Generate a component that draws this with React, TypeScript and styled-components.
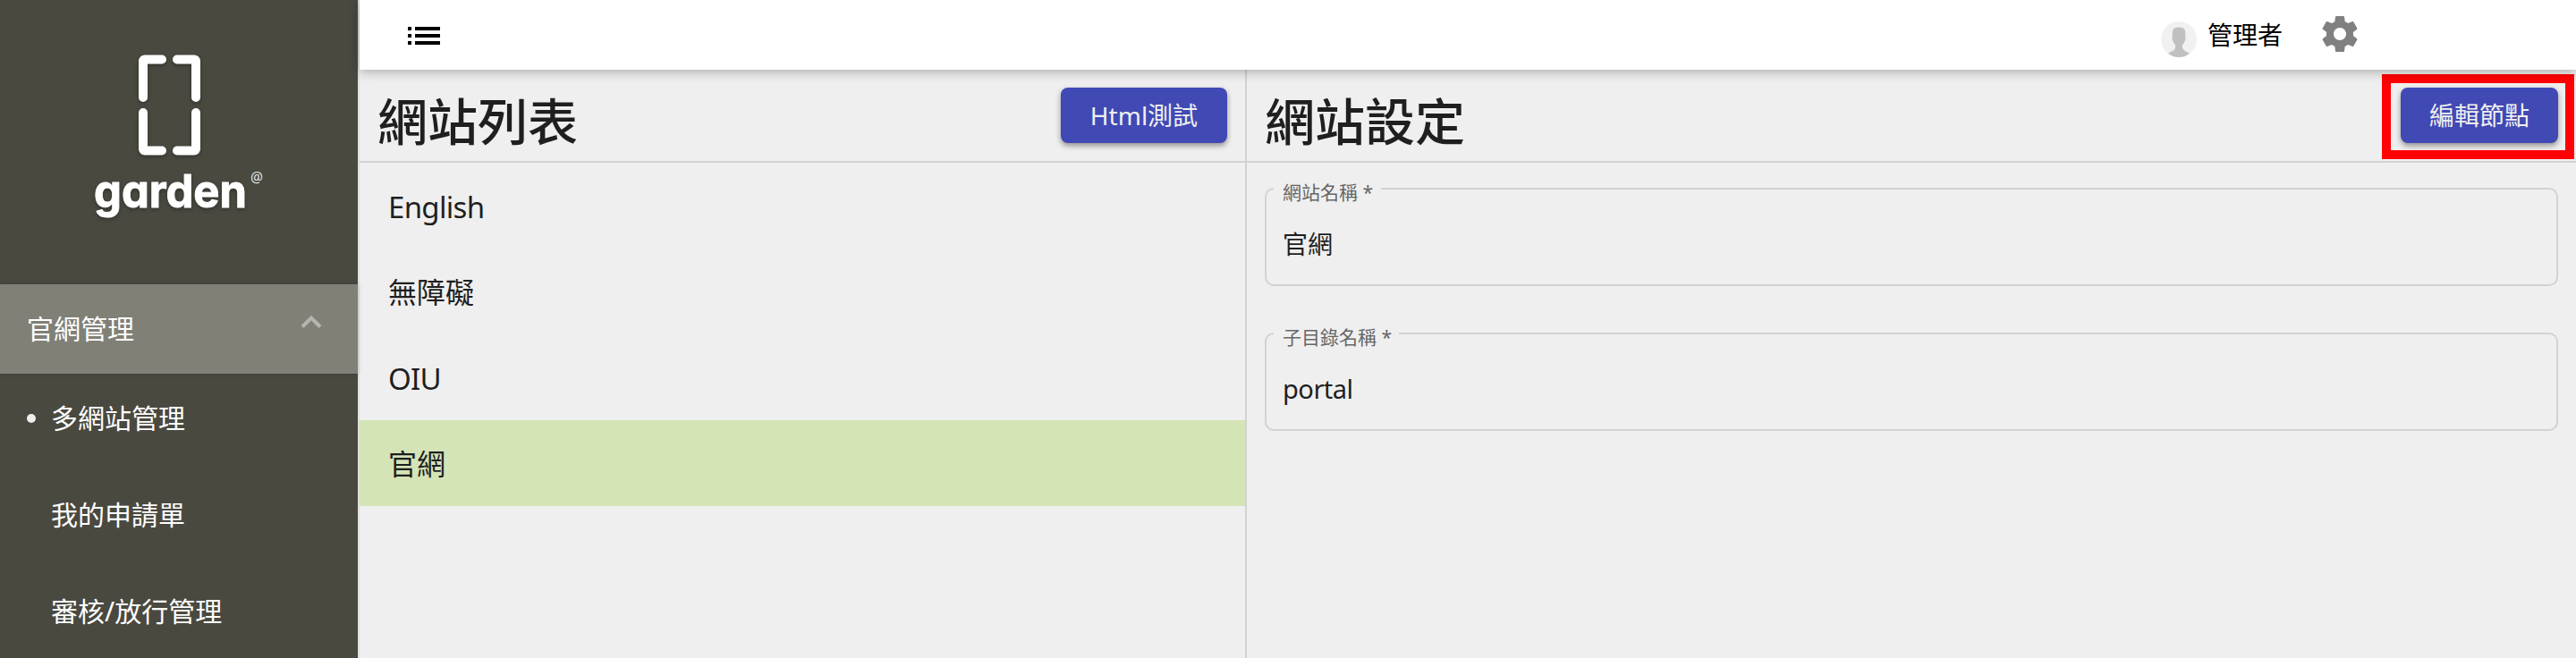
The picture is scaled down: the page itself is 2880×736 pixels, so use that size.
import React from "react";
import styled, { createGlobalStyle } from "styled-components";

const GlobalStyle = createGlobalStyle`
  *, *::before, *::after { box-sizing: border-box; }
  body {
    margin: 0;
    background: #efefef;
    color: #1f1f1f;
    font-family: "Noto Sans", "Noto Sans CJK TC", sans-serif;
  }
`;

const Page = styled.div`
  display: flex;
  width: 2880px;
  height: 736px;
  overflow: hidden;
`;

const Sidebar = styled.aside`
  flex: none;
  width: 402px;
  border-right: 2px solid #dfdfdf;
  background: #4a4940;
  color: #fff;
  font-size: 30px;
`;

const LogoArea = styled.div`
  height: 318px;
`;

const MenuGroup = styled.div`
  display: flex;
  align-items: center;
  justify-content: space-between;
  height: 100px;
  padding: 0 38px 0 30px;
  background: #818077;
  box-shadow: 0 0 6px rgba(0, 0, 0, 0.18);
`;

const MenuLabel = styled.span`
  padding-bottom: 4px;
`;

const Chevron = styled.svg`
  margin-bottom: 16px;
`;

const Menu = styled.nav`
  display: flex;
  flex-direction: column;
  gap: 8px;
`;

const MenuItem = styled.a`
  display: flex;
  align-items: center;
  height: 100px;
  padding-left: 30px;
`;

const Bullet = styled.i<{ $on: boolean }>`
  width: 10px;
  height: 10px;
  margin-right: 17px;
  border-radius: 50%;
  background: ${(p) => (p.$on ? "#efefef" : "transparent")};
`;

const Main = styled.main`
  flex: 1;
  display: flex;
  flex-direction: column;
`;

const TopBar = styled.header`
  position: relative;
  z-index: 1;
  display: flex;
  align-items: flex-start;
  height: 78px;
  padding: 0 240px 0 54px;
  background: #fff;
  color: #000;
  box-shadow: 0 2px 12px rgba(0, 0, 0, 0.3);
`;

const ListIcon = styled.svg`
  margin: 30px auto 0 0;
`;

const Avatar = styled.svg`
  margin: 24px 12px 0 0;
`;

const UserName = styled.span`
  width: 84px;
  margin-right: 40px;
  font-size: 28px;
  line-height: 78px;
`;

const Gear = styled.svg`
  margin-top: 14px;
`;

const Panels = styled.div`
  flex: 1;
  display: flex;
`;

const Panel = styled.section<{ $width: number }>`
  width: ${(p) => p.$width}px;
  & + & { border-left: 2px solid #d2d2d2; }
`;

const PanelHeader = styled.div`
  display: flex;
  justify-content: space-between;
  height: 104px;
  padding: 20px 20px 0 20px;
  border-bottom: 2px solid #d2d2d2;
`;

const Title = styled.h1`
  margin: 0;
  font-size: 56px;
  font-weight: 500;
  line-height: 74px;
`;

const Button = styled.button<{ $width: number }>`
  display: block;
  width: ${(p) => p.$width}px;
  height: 62px;
  padding: 0;
  border: 0;
  border-radius: 8px;
  background: #4149b4;
  color: #efefef;
  font: inherit;
  font-size: 28px;
  line-height: 60px;
  white-space: nowrap;
  box-shadow: 0 3px 6px rgba(0, 0, 0, 0.4);
`;

const Highlight = styled.div`
  position: relative;
  height: 62px;
  &::after {
    content: "";
    position: absolute;
    inset: -15px -18px -18px -21px;
    border: 10px solid #ff0005;
  }
`;

const SiteRow = styled.div<{ $selected: boolean }>`
  height: 96px;
  padding: 1px 0 0 32px;
  background: ${(p) => (p.$selected ? "#d4e4b7" : "transparent")};
  font-size: 32px;
  line-height: 96px;
  &:lang(en) {
    font-size: 33px;
    letter-spacing: -0.7px;
    padding-top: 2px;
  }
`;

const Fields = styled.div`
  display: flex;
  flex-direction: column;
  gap: 52px;
  padding: 28px 20px 0 20px;
`;

const Field = styled.fieldset`
  height: 110px;
  min-width: 0;
  margin: 0;
  padding: 0 0 0 18px;
  border: 2px solid #d2d2d2;
  border-radius: 10px;
`;

const Legend = styled.legend<{ $width: number }>`
  display: flex;
  align-items: center;
  width: ${(p) => p.$width}px;
  height: 2px;
  margin-left: -10px;
  padding: 0 0 0 10px;
  color: #666;
  font-size: 21px;
  white-space: nowrap;
`;

const LegendText = styled.span`
  flex: none;
  padding-top: 8px;
  line-height: 30px;
`;

const Value = styled.div`
  padding-top: 33px;
  font-size: 28px;
  line-height: 56px;
  &:lang(en) {
    font-size: 29px;
    letter-spacing: -0.5px;
  }
`;

const menu = ["多網站管理", "我的申請單", "審核/放行管理"];
const sites = [
  { name: "English", lang: "en" },
  { name: "無障礙", lang: "zh-Hant" },
  { name: "OIU", lang: "en" },
  { name: "官網", lang: "zh-Hant" },
];
const fields = [
  { label: "網站名稱 *", notch: 120, value: "官網", lang: "zh-Hant" },
  { label: "子目錄名稱 *", notch: 140, value: "portal", lang: "en" },
];

function Logo() {
  return (
    <svg width="400" height="318" viewBox="0 0 400 318">
      <g style={{ filter: "drop-shadow(0 2px 2px rgba(0,0,0,.3))" }}>
        <g fill="none" stroke="#fff" strokeWidth="10" strokeLinecap="round" strokeLinejoin="round">
          <path d="M181 66.500H162Q160 66.500 160 68.500V109" />
          <path d="M198 66.500H217Q219 66.500 219 68.500V109" />
          <path d="M160 126V166.500Q160 168.500 162 168.500H181" />
          <path d="M219 126V166.500Q219 168.500 217 168.500H198" />
        </g>
        <text
          x="105"
          y="232"
          fill="#fff"
          stroke="#fff"
          strokeWidth="1"
          strokeLinejoin="round"
          fontFamily="Inter, sans-serif"
          fontWeight="700"
          fontSize="51"
          textLength="171"
          lengthAdjust="spacingAndGlyphs"
          style={{ fontFeatureSettings: '"cv11" 1' }}
        >
          garden
        </text>
      </g>
      <text x="280" y="204" fill="#e4e4e0" fontFamily="Noto Sans, sans-serif" fontSize="15.500">
        @
      </text>
    </svg>
  );
}

export default function App() {
  return (
    <Page>
      <GlobalStyle />
      <Sidebar>
        <LogoArea>
          <Logo />
        </LogoArea>
        <MenuGroup>
          <MenuLabel>官網管理</MenuLabel>
          <Chevron width="28" height="20" viewBox="0 0 28 20">
            <path d="M4 15.500 14 5.500l10 10" fill="none" stroke="#b5b4af" strokeWidth="4" />
          </Chevron>
        </MenuGroup>
        <Menu>
          {menu.map((m, i) => (
            <MenuItem key={m}>
              <Bullet $on={i === 0} />
              <MenuLabel>{m}</MenuLabel>
            </MenuItem>
          ))}
        </Menu>
      </Sidebar>
      <Main>
        <TopBar>
          <ListIcon width="36" height="20" viewBox="0 0 36 20">
            <path d="M0 0h4v4H0zM8 0h28v4H8zM0 8h4v4H0zM8 8h28v4H8zM0 16h4v4H0zM8 16h28v4H8z" />
          </ListIcon>
          <Avatar width="40" height="40" viewBox="0 0 40 40">
            <circle cx="20" cy="20" r="20" fill="#f1f1f1" />
            <path
              d="M13 11Q13 6.500 20 6.500T27 11L27.500 19Q26.500 24 24 26V30Q25 32.500 32 35.500Q27 40 20 40T8 35.500Q15 32.500 16 30V26Q13.500 24 12.500 19Z"
              fill="#c0c0c2"
            />
          </Avatar>
          <UserName>管理者</UserName>
          <Gear width="48" height="48" viewBox="0 0 24 24" fill="#808080">
            <path d="M19.430 12.980c.04-.32.07-.64.07-.98s-.03-.66-.07-.98l2.110-1.650c.19-.15.24-.42.12-.64l-2-3.460c-.12-.22-.39-.3-.61-.22l-2.490 1c-.52-.4-1.080-.73-1.690-.98l-.38-2.650C14.460 2.180 14.250 2 14 2h-4c-.25 0-.46.18-.49.42l-.38 2.650c-.61.25-1.170.59-1.690.98l-2.490-1c-.23-.09-.49 0-.61.22l-2 3.460c-.13.22-.07.49.12.64l2.110 1.650c-.04.32-.07.65-.07.98s.03.66.07.98l-2.110 1.650c-.19.15-.24.42-.12.64l2 3.460c.12.22.39.3.61.22l2.490-1c.52.4 1.080.73 1.690.98l.38 2.650c.03.24.24.42.49.42h4c.25 0 .46-.18.49-.42l.38-2.650c.61-.25 1.170-.59 1.690-.98l2.490 1c.23.09.49 0 .61-.22l2-3.460c.12-.22.07-.49-.12-.64l-2.110-1.650zM12 15.500c-1.930 0-3.500-1.570-3.500-3.500s1.570-3.500 3.500-3.500 3.500 1.570 3.500 3.500-1.570 3.500-3.500 3.500z" />
          </Gear>
        </TopBar>
        <Panels>
          <Panel $width={990}>
            <PanelHeader>
              <Title>網站列表</Title>
              <Button $width={186}>Html測試</Button>
            </PanelHeader>
            {sites.map((s) => (
              <SiteRow key={s.name} lang={s.lang} $selected={s.name === "官網"}>
                {s.name}
              </SiteRow>
            ))}
          </Panel>
          <Panel $width={1488}>
            <PanelHeader>
              <Title>網站設定</Title>
              <Highlight>
                <Button $width={176}>編輯節點</Button>
              </Highlight>
            </PanelHeader>
            <Fields>
              {fields.map((f) => (
                <Field key={f.label}>
                  <Legend $width={f.notch}>
                    <LegendText>{f.label}</LegendText>
                  </Legend>
                  <Value lang={f.lang}>{f.value}</Value>
                </Field>
              ))}
            </Fields>
          </Panel>
        </Panels>
      </Main>
    </Page>
  );
}
